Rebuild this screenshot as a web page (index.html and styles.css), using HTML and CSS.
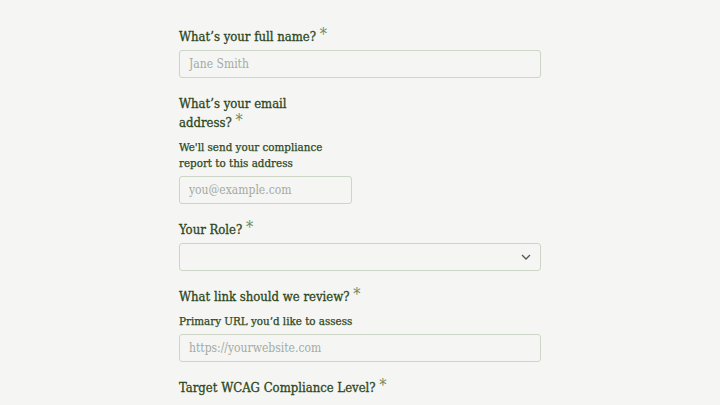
FILE: index.html
```html
<!DOCTYPE html>
<html lang="en">
<head>
<meta charset="utf-8">
<link rel="stylesheet" href="styles.css">
</head>
<body>
<form class="form">
  <div class="field">
    <label class="label">What’s your full name?&nbsp;<span class="req">*</span></label>
    <input class="input" type="text" placeholder="Jane Smith">
  </div>
  <div class="row">
    <div class="field">
      <label class="label">What’s your email address?&nbsp;<span class="req">*</span></label>
      <p class="help">We'll send your compliance report to this address</p>
      <input class="input" type="email" placeholder="you@example.com">
    </div>
    <div></div>
  </div>
  <div class="field">
    <label class="label">Your Role?&nbsp;<span class="req">*</span></label>
    <div class="select">
      <svg class="chev" width="10" height="6" viewBox="0 0 10 6"><path d="M1 1l4 4 4-4" fill="none" stroke="#555" stroke-width="1.3"/></svg>
    </div>
  </div>
  <div class="field">
    <label class="label">What link should we review?&nbsp;<span class="req">*</span></label>
    <p class="help">Primary URL you’d like to assess</p>
    <input class="input" type="url" placeholder="https://yourwebsite.com">
  </div>
  <div class="field">
    <label class="label">Target WCAG Compliance Level?&nbsp;<span class="req">*</span></label>
  </div>
</form>
</body>
</html>
```
FILE: styles.css
```css
html, body {
  margin: 0;
  padding: 0;
  background: #f5f5f4;
}
body {
  font-family: "DejaVu Serif Condensed", "DejaVu Serif", "Liberation Serif", serif;
  font-stretch: condensed;
  color: #2d481c;
}
.form {
  width: 362px;
  margin: 0 auto;
  padding-top: 27px;
  display: flex;
  flex-direction: column;
  gap: 16px;
}
.row {
  display: grid;
  grid-template-columns: 1fr 1fr;
  gap: 16px;
}
.field {
  display: flex;
  flex-direction: column;
}
.label {
  font-size: 13px;
  line-height: 19px;
  margin-bottom: 4px;
  -webkit-text-stroke: 0.3px #2d481c;
}
.req {
  color: #6e8a5c;
  font-size: 16px;
  vertical-align: 1px;
  line-height: 0;
  -webkit-text-stroke: 0;
}
.help {
  margin: 3px 0 5px;
  font-size: 11.5px;
  line-height: 16px;
  -webkit-text-stroke: 0.25px #2d481c;
}
.input, .select {
  box-sizing: border-box;
  height: 28px;
  width: 100%;
  border: 1px solid #cdd6c6;
  border-radius: 3px;
  background: #f5f5f4;
  font-family: inherit;
  font-stretch: inherit;
  font-size: 12px;
  padding: 0 9px;
  color: #2d481c;
  outline: none;
  margin: 0;
}
.input::placeholder {
  color: #a4ab9e;
}
.select {
  display: flex;
  align-items: center;
  justify-content: flex-end;
  padding-right: 9px;
}
```
